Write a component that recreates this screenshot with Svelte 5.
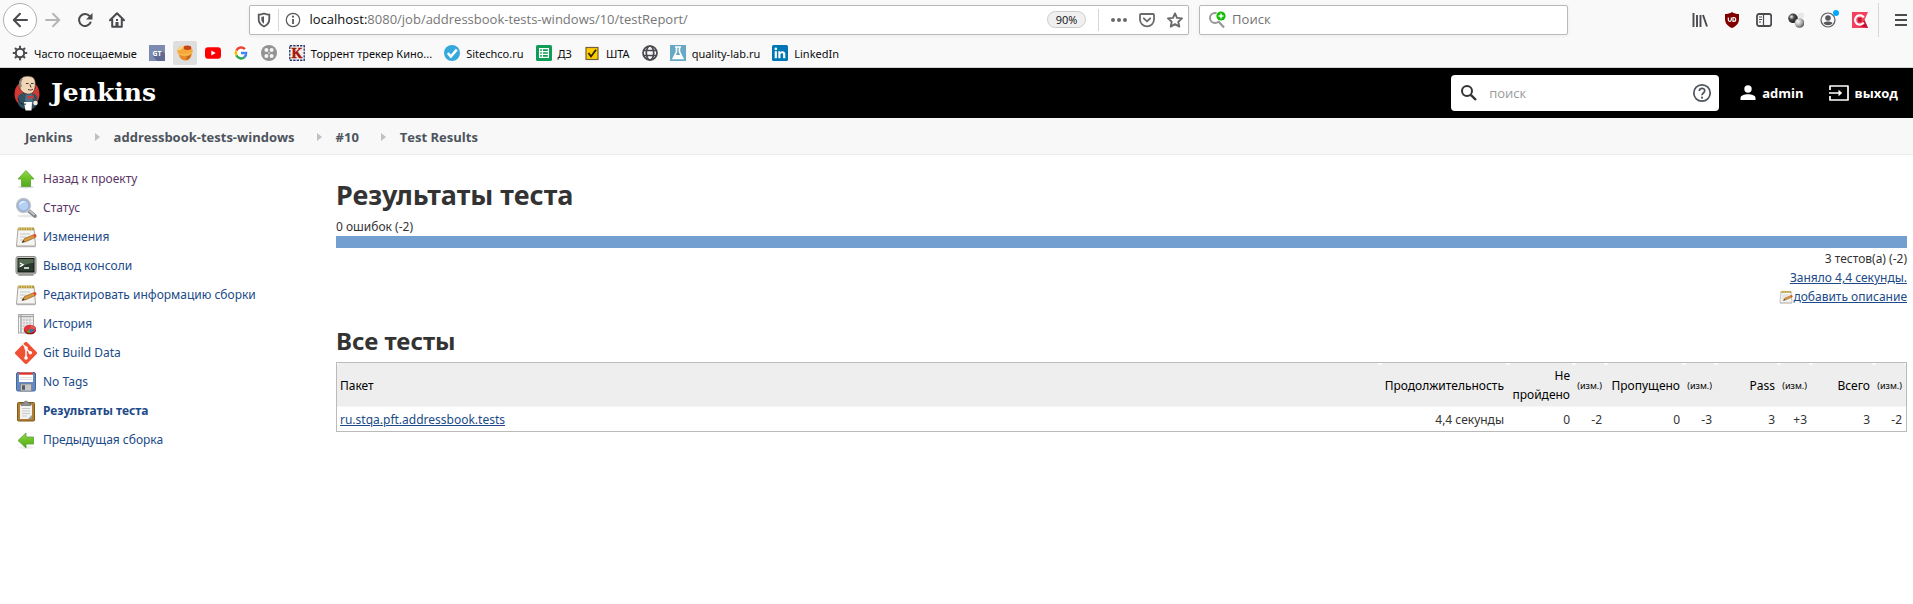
<script>
  const bookmarks = [
    { icon: 'gear', label: 'Часто посещаемые' },
    { icon: 'gt', name: 'GT' },
    { icon: 'bun', name: 'Bun', active: true },
    { icon: 'youtube', name: 'YouTube' },
    { icon: 'google', name: 'Google' },
    { icon: 'reel', name: 'Reel' },
    { icon: 'kino', label: 'Торрент трекер Кино...' },
    { icon: 'tick', label: 'Sitechco.ru' },
    { icon: 'sheet', label: 'ДЗ' },
    { icon: 'checkbox', label: 'ШТА' },
    { icon: 'globe', name: 'Globe' },
    { icon: 'flask', label: 'quality-lab.ru' },
    { icon: 'linkedin', label: 'LinkedIn' }
  ];

  const crumbs = ['Jenkins', 'addressbook-tests-windows', '#10', 'Test Results'];

  const tasks = [
    { icon: 'up', label: 'Назад к проекту', visited: true },
    { icon: 'search', label: 'Статус', visited: true },
    { icon: 'notepad', label: 'Изменения' },
    { icon: 'terminal', label: 'Вывод консоли' },
    { icon: 'notepad', label: 'Редактировать информацию сборки' },
    { icon: 'graph', label: 'История' },
    { icon: 'git', label: 'Git Build Data' },
    { icon: 'save', label: 'No Tags' },
    { icon: 'clipboard', label: 'Результаты теста', current: true },
    { icon: 'previous', label: 'Предыдущая сборка' }
  ];

  const columns = [
    { title: 'Продолжительность', cls: 'duration' },
    { title: 'Не пройдено', cls: 'failed' },
    { title: '(изм.)', cls: 'diff' },
    { title: 'Пропущено', cls: 'skipped' },
    { title: '(изм.)', cls: 'diff' },
    { title: 'Pass', cls: 'count' },
    { title: '(изм.)', cls: 'diff' },
    { title: 'Всего', cls: 'count' },
    { title: '(изм.)', cls: 'diff' }
  ];

  const rows = [
    { name: 'ru.stqa.pft.addressbook.tests', cells: ['4,4 секунды', '0', '-2', '0', '-3', '3', '+3', '3', '-2'] }
  ];
</script>

{#snippet bookmarkIcon(kind)}
  <svg width="16" height="16" viewBox="0 0 16 16" aria-hidden="true">
    {#if kind === 'gear'}
      <circle cx="8" cy="8" r="4.2" fill="none" stroke="#4a4a4f" stroke-width="2" />
      <g stroke="#4a4a4f" stroke-width="2" stroke-linecap="round">
        <path d="M8 1.6v2M8 12.4v2M1.6 8h2M12.4 8h2M3.5 3.5l1.3 1.3M11.2 11.2l1.3 1.3M3.5 12.5l1.3-1.3M11.2 4.8l1.3-1.3" />
      </g>
    {:else if kind === 'gt'}
      <rect width="16" height="16" fill="#7d8bb0" />
      <path d="M12.5 5.5 16 9v7H8L3.5 10.5z" fill="#5d6b93" />
      <text x="8" y="10.6" text-anchor="middle" font-size="7" font-weight="700" fill="#fff">GT</text>
    {:else if kind === 'bun'}
      <path d="M1.500 8 14.500 6.500c.8 4.500-1.500 9-6 9-4 0-6.500-3-7-7.500z" fill="#e8892a" />
      <path d="M9 15.300C12.500 14 14.500 11 14.500 7.500l-3.500 1z" fill="#c8651a" />
      <ellipse cx="8" cy="6" rx="7.800" ry="5.200" fill="#f5a93a" />
      <path d="M.5 5.500c1-3 4-4.600 6.500-4.700-.5 2.500-3 4.700-6.500 4.700z" fill="#fbd987" />
      <ellipse cx="10.500" cy="2.800" rx="3.800" ry="2.200" fill="#c8431a" />
      <path d="M1.500 8.600c3 2 9 1.900 13-.8" stroke="#fbc860" fill="none" stroke-width=".8" />
    {:else if kind === 'youtube'}
      <rect y="2.200" width="16" height="11.600" rx="3" fill="#f00" />
      <path d="M6.300 5.500v5L10.700 8z" fill="#fff" />
    {:else if kind === 'google'}
      <circle cx="8" cy="8" r="8" fill="#fff" />
      <g fill="none" stroke-width="2.500">
        <path d="M11.900 4.100A5.200 5.200 0 0 0 3.400 5.600" stroke="#ea4335" />
        <path d="M3.400 5.600a5.200 5.200 0 0 0 0 4.800" stroke="#fbbc05" />
        <path d="M3.400 10.400a5.200 5.200 0 0 0 8 1.800" stroke="#34a853" />
        <path d="M11.400 12.200A5.200 5.200 0 0 0 13.100 8.100H8" stroke="#4285f4" />
      </g>
    {:else if kind === 'reel'}
      <circle cx="8" cy="8" r="8" fill="#929292" />
      <g fill="#f4f4f4">
        <circle cx="5.400" cy="5" r="2" /><circle cx="10.600" cy="5" r="2" />
        <circle cx="5.400" cy="11" r="2" /><circle cx="10.600" cy="11" r="2" />
        <circle cx="8" cy="8" r=".8" />
      </g>
    {:else if kind === 'kino'}
      <rect x=".8" y=".8" width="14.400" height="14.400" fill="#fff" stroke="#28376c" stroke-width="1.400" stroke-dasharray="2.400 1" />
      <rect x="2" y="2" width="12" height="12" fill="#fbeee0" />
      <text x="8" y="13" text-anchor="middle" font-size="14" font-weight="700" fill="#a3160d" stroke="#a3160d" stroke-width=".5" class="serif">K</text>
    {:else if kind === 'tick'}
      <circle cx="8" cy="8" r="8" fill="#35a9dc" />
      <path d="m3.800 8 3 3.500 6-6.800" fill="none" stroke="#fff" stroke-width="2.600" />
    {:else if kind === 'sheet'}
      <rect width="16" height="16" rx="1.500" fill="#109d58" />
      <path d="M3 3h10v10H3z" fill="#fff" />
      <path d="M4.200 4.300h1.600v1.600H4.200zM7 4.300h4.800v1.600H7zM4.200 7.200h1.600v1.600H4.200zM7 7.200h4.800v1.600H7zM4.200 10.100h1.600v1.600H4.200zM7 10.100h4.800v1.600H7z" fill="#109d58" />
    {:else if kind === 'checkbox'}
      <rect x="2" y="2.500" width="12" height="12" fill="#fc0" stroke="#716339" stroke-width="1.200" />
      <path d="m4.500 8 2.500 3.500L12 4.800" fill="none" stroke="#2d2500" stroke-width="1.800" />
    {:else if kind === 'globe'}
      <g fill="none" stroke="#4a4a4f" stroke-width="1.700">
        <circle cx="8" cy="8" r="7" /><ellipse cx="8" cy="8" rx="3.700" ry="7" />
        <path d="M1.500 5.500h13M1.500 10.500h13" />
      </g>
    {:else if kind === 'flask'}
      <rect width="16" height="16" fill="#67a8c5" />
      <path d="M5 2h6M6.500 2v4.800L3.200 13.500h9.600L9.500 6.800V2" fill="none" stroke="#fff" stroke-width="1.600" />
      <path d="M5.500 10h5l1.500 3H4z" fill="#fff" />
    {:else if kind === 'linkedin'}
      <rect width="16" height="16" rx="1.500" fill="#0077b5" />
      <path d="M2.700 6.300h2.200v7H2.700zM6.300 6.300h2.100v1c.9-1.700 4.900-1.800 4.900 1.700v4.300h-2.200V9.600c0-2-2.600-1.800-2.600 0v3.700H6.300z" fill="#fff" />
      <circle cx="3.800" cy="3.900" r="1.300" fill="#fff" />
    {/if}
  </svg>
{/snippet}

{#snippet notepad(size)}
  <svg width={size} height={size} viewBox="0 0 22 22" aria-hidden="true">
    <path d="M1.500 20.500h19" stroke="#bbb" stroke-width="1.500" />
    <path d="M3 2.500h16l1.500 17.500h-19z" fill="#f4f4f2" stroke="#aaa69d" />
    <path d="M3 1.500h16v2.800H3z" fill="#b6993b" />
    <path d="M4 1.200v2.500M6.500 1.200v2.500M9 1.200v2.500M11.500 1.200v2.500M14 1.200v2.500M16.500 1.200v2.500" stroke="#e5d28a" />
    <path d="M5 8h10M5 11h6M5 14h3" stroke="#c6c6c6" />
    <path d="m7 16.500 2.500-4 9-3.700 1.700 2.700-9 4z" fill="#dc9a3c" stroke="#8a5a20" stroke-width=".7" />
    <path d="m18 9 2.300-1.300 1.500 2.500-2 1.300z" fill="#e04732" />
    <path d="m7 16.500 1.300-2.200 1.500 1.500z" fill="#333" />
  </svg>
{/snippet}

{#snippet taskIcon(kind)}
  {#if kind === 'notepad'}
    {@render notepad(22)}
  {:else}
    <svg width="22" height="22" viewBox="0 0 22 22" aria-hidden="true">
      {#if kind === 'up'}
        <ellipse cx="11" cy="19" rx="8" ry="1.500" fill="#ddd" />
        <path d="M11 2.500 19 11h-3.500v7.500h-9V11H3z" fill="url(#leaf)" stroke="#58a52c" stroke-width=".8" />
      {:else if kind === 'previous'}
        <ellipse cx="11" cy="18.500" rx="8" ry="1.500" fill="#eee" />
        <path d="M3 11.500 11 4v4h7.500v7H11v4z" fill="url(#leaf)" stroke="#5b9f3a" stroke-width=".8" />
      {:else if kind === 'search'}
        <ellipse cx="11" cy="19" rx="9" ry="1.500" fill="#e8e8e8" />
        <path d="m14 14 6 5" stroke="#85878a" stroke-width="3.600" stroke-linecap="round" />
        <path d="m14.500 13.800 5 4.200" stroke="#d5d7d9" stroke-width="1.300" />
        <circle cx="8.500" cy="8.500" r="6.700" fill="#b5d0f3" stroke="#c2c4c5" stroke-width="2" />
        <path d="M4 8.500a4.500 4.500 0 0 1 7-3.800c-3 .2-5 1.800-7 3.800z" fill="#e8f2fd" />
        <circle cx="8.500" cy="8.500" r="5.600" fill="none" stroke="#7da2d2" />
      {:else if kind === 'terminal'}
        <path d="M5 18h12l2 3H3z" fill="#aaa" />
        <rect x="1" y="1.500" width="20" height="17.500" rx="2" fill="#c9cac5" stroke="#85877f" />
        <rect x="3" y="3.500" width="16" height="13.500" fill="#2b3b2c" stroke="#111" />
        <path d="M3.500 4h15v4c-5 0-10 2-15 5z" fill="#536851" />
        <path d="m5 8 3 1.800L5 11.600M9 13h5" fill="none" stroke="#fff" stroke-width="1.300" />
      {:else if kind === 'graph'}
        <rect x="3.500" y="1.500" width="15" height="18.500" fill="#f7f7f7" stroke="#aaa" />
        <path d="M4 3.500h14M6 2v18" stroke="#a5a5a5" stroke-width="1.500" />
        <path d="M6 7h12M6 10h12M6 13h12M6 16h12M9 4v16M12 4v16M15 4v16" stroke="#bbb" stroke-width=".8" />
        <ellipse cx="15" cy="17.300" rx="6" ry="4" fill="#8b1118" />
        <ellipse cx="15" cy="15.800" rx="6" ry="4" fill="#df3439" />
        <path d="m15 15.800 1-3.700c3 .3 5 1.700 5 3.700z" fill="#d85c59" />
        <path d="M15 16v4c-1.500 0-2.500-.4-3.500-1z" fill="#619a2c" />
        <path d="M15 16h4c0 2-1.500 3-4 3.800z" fill="#3c70ad" />
      {:else if kind === 'git'}
        <path d="M9.700.6a1.800 1.800 0 0 1 2.600 0l9.100 9.100a1.800 1.800 0 0 1 0 2.600l-9.100 9.100a1.800 1.800 0 0 1-2.600 0L.6 12.300a1.800 1.800 0 0 1 0-2.600z" fill="#f05033" />
        <path d="m8 2.500 3 3v11M11 6.500l4 4" stroke="#fff" stroke-width="1.500" fill="none" />
        <circle cx="11" cy="6" r="1.800" fill="#fff" /><circle cx="11" cy="16" r="1.800" fill="#fff" /><circle cx="15.300" cy="10.800" r="1.800" fill="#fff" />
      {:else if kind === 'save'}
        <rect x="1.500" y="1.500" width="19" height="18.500" rx="1.500" fill="#6389c3" stroke="#45699f" />
        <path d="M4 1.500h14v9.500H4z" fill="#fff" />
        <path d="M4 1.500h14v2.200H4z" fill="#e33325" />
        <path d="M5 6.500h12M5 8.500h12" stroke="#ddd" />
        <rect x="5.500" y="13" width="11" height="7" fill="#c5c7c9" stroke="#7a7d82" stroke-width=".7" />
        <rect x="7" y="14.300" width="3" height="4.500" fill="#565b63" />
      {:else if kind === 'clipboard'}
        <rect x="2.500" y="2.500" width="17" height="18.500" rx="1" fill="#b17d31" stroke="#80591d" />
        <path d="M5 4.500h12v14.500H5z" fill="#f2f2f0" />
        <path d="M7 8.500h8M7 11h8M7 13.500h8M7 16h5" stroke="#c9c9c9" />
        <path d="m17 15-4 4h4z" fill="#999" />
        <path d="M6 5.500V3.700l2.500-.7c.5-2.500 4.500-2.500 5 0l2.500.7v1.800z" fill="#8f918c" stroke="#60625e" stroke-width=".6" />
      {/if}
    </svg>
  {/if}
{/snippet}

<svg class="defs" width="0" height="0" aria-hidden="true">
  <defs>
    <linearGradient id="leaf" x1="0" y1="0" x2="0" y2="1">
      <stop offset="0" stop-color="#92d850" /><stop offset=".5" stop-color="#6cc026" /><stop offset="1" stop-color="#55a91d" />
    </linearGradient>
    <radialGradient id="ball" cx=".35" cy=".35" r=".7">
      <stop offset="0" stop-color="#fff" /><stop offset=".35" stop-color="#555" /><stop offset="1" stop-color="#111" />
    </radialGradient>
    <radialGradient id="ballLight" cx=".35" cy=".35" r=".7">
      <stop offset="0" stop-color="#fff" /><stop offset=".6" stop-color="#aaa" /><stop offset="1" stop-color="#555" />
    </radialGradient>
  </defs>
</svg>

<div class="browser">
  <div class="toolbar">
    <div class="nav">
      <button class="back" aria-label="Назад">
        <svg width="16" height="16" viewBox="0 0 16 16"><path d="M15 8H2M8 1.800 1.800 8 8 14.200" fill="none" stroke="#4a4a4f" stroke-width="2" stroke-linecap="round" stroke-linejoin="round" /></svg>
      </button>
      <button aria-label="Вперёд">
        <svg width="16" height="16" viewBox="0 0 16 16"><path d="M1 8h13M8 1.800 14.200 8 8 14.200" fill="none" stroke="#b5b5b6" stroke-width="2" stroke-linecap="round" stroke-linejoin="round" /></svg>
      </button>
      <button aria-label="Обновить">
        <svg width="16" height="16" viewBox="0 0 16 16"><path d="M13.500 10.500a6 6 0 1 1-.8-6.300" fill="none" stroke="#4a4a4f" stroke-width="2" stroke-linecap="round" /><path d="M15.500 1v6.500H9z" fill="#4a4a4f" /></svg>
      </button>
      <button aria-label="Домой">
        <svg width="16" height="16" viewBox="0 0 16 16"><path d="M1 8.200 8 1.300l7 6.900M3.200 7v7.700h9.600V7" fill="none" stroke="#4a4a4f" stroke-width="2" stroke-linecap="round" stroke-linejoin="round" /><path d="M6.500 15v-5h3v5M7 7h2v2H7z" fill="#4a4a4f" /></svg>
      </button>
    </div>
    <div class="spacer"></div>
    <div class="field url">
      <svg width="16" height="16" viewBox="0 0 16 16" aria-hidden="true"><path d="M8 1.500c2 .9 3.500 1.200 5.300 1.200v4.500c0 3.300-2 5.800-5.300 7.300-3.300-1.500-5.300-4-5.300-7.300V2.700C4.500 2.700 6 2.400 8 1.500z" fill="none" stroke="#58585c" stroke-width="1.800" /><path d="M8 4.200v7.500C6 10.500 5.300 9 5.300 7V5z" fill="#58585c" /></svg>
      <i class="line"></i>
      <svg width="16" height="16" viewBox="0 0 16 16" aria-hidden="true"><circle cx="8" cy="8" r="6.700" fill="none" stroke="#58585c" stroke-width="1.200" /><path d="M8 7v5" stroke="#58585c" stroke-width="1.800" /><circle cx="8" cy="4.700" r="1.100" fill="#58585c" /></svg>
      <div class="address">localhost:<span>8080/job/addressbook-tests-windows/10/testReport/</span></div>
      <button class="zoom">90%</button>
      <i class="line"></i>
      <div class="actions">
        <svg width="16" height="16" viewBox="0 0 16 16" aria-hidden="true"><g fill="#6a6a6d"><circle cx="2" cy="8" r="2" /><circle cx="8" cy="8" r="2" /><circle cx="14" cy="8" r="2" /></g></svg>
        <svg width="16" height="16" viewBox="0 0 16 16" aria-hidden="true"><path d="M2 2h12c.6 0 1 .4 1 1v4.500a7 6.800 0 0 1-14 0V3c0-.6.400-1 1-1z" fill="none" stroke="#6a6a6d" stroke-width="1.800" /><path d="M4.800 6.300 8 9.400l3.200-3.100" fill="none" stroke="#6a6a6d" stroke-width="1.800" stroke-linecap="round" stroke-linejoin="round" /></svg>
        <svg width="16" height="16" viewBox="0 0 16 16" aria-hidden="true"><path d="m8 1.400 2 4.500 5 .500-3.700 3.300 1 4.900L8 12.100l-4.300 2.500 1-4.900L1 6.400l5-.5z" fill="none" stroke="#6a6a6d" stroke-width="1.900" stroke-linejoin="round" /></svg>
      </div>
    </div>
    <div class="field websearch">
      <svg width="18" height="18" viewBox="0 0 18 18" aria-hidden="true"><circle cx="7" cy="7" r="5" fill="none" stroke="#98989a" stroke-width="2" /><path d="m10.500 10.500 5.500 6" stroke="#98989a" stroke-width="2.200" /><circle cx="13" cy="5" r="5.200" fill="#fff" /><circle cx="13" cy="5" r="4.600" fill="#12bc00" /><path d="M13 2.500v5M10.500 5h5" stroke="#fff" stroke-width="1.400" /></svg>
      <input type="text" placeholder="Поиск" aria-label="Поиск в интернете" />
    </div>
    <div class="spacer"></div>
    <div class="extensions">
      <svg width="16" height="16" viewBox="0 0 16 16" aria-hidden="true"><path d="M1.500 1v14M5 3v12M8.500 3v12M11 3l4 11.500" stroke="#4a4a4f" stroke-width="1.900" /></svg>
      <svg width="16" height="16" viewBox="0 0 16 16" aria-hidden="true"><path d="M8 0c2 1.500 4.500 2 7 2v5c0 5-3.500 7.500-7 9-3.500-1.500-7-4-7-9V2c2.500 0 5-.5 7-2z" fill="#800000" /><path d="M4.300 5.500v2.300a1.500 1.500 0 0 0 3 0V5.500M9 5.500v3.800h.8a1.900 1.900 0 0 0 0-3.800z" fill="none" stroke="#fff" stroke-width="1.200" /></svg>
      <svg width="16" height="16" viewBox="0 0 16 16" aria-hidden="true"><rect x="1" y="2" width="14.200" height="12" rx="2" fill="none" stroke="#4a4a4f" stroke-width="1.800" /><path d="M7.500 2v12M3 5h3M3 7.500h3M3 10h2" stroke="#4a4a4f" stroke-width="1.200" /></svg>
      <svg width="16" height="16" viewBox="0 0 16 16" aria-hidden="true"><circle cx="13" cy="3.500" r="3" fill="#e8e8e8" /><circle cx="5" cy="6.300" r="4.800" fill="url(#ball)" /><circle cx="11.500" cy="11" r="4.800" fill="url(#ballLight)" /></svg>
      <span class="account">
        <svg width="16" height="16" viewBox="0 0 16 16" aria-hidden="true"><circle cx="8" cy="8" r="7" fill="none" stroke="#58585c" stroke-width="1.200" /><circle cx="8" cy="6" r="2.800" fill="#58585c" /><path d="M3.500 11c1.500-2 7.500-2 9 0-1.500 3-7.500 3-9 0z" fill="#58585c" /></svg>
      </span>
      <svg width="16" height="16" viewBox="0 0 16 16" aria-hidden="true"><path d="M0 0h16l-3.500 8 3.500 8H0z" fill="#f5405e" /><path d="M4 13.500 16 16l-3.500-8L9 12z" fill="#c5142f" /><path d="M11.800 5.500a4.700 4.700 0 1 0 0 5" fill="none" stroke="#fff" stroke-width="2.200" /><path d="M6.800 10.200V6.600h1.400a1 1 0 0 1 0 2H6.800M8.300 8.800l1 1.400" fill="none" stroke="#b21029" stroke-width="1.100" /></svg>
    </div>
    <i class="line tall"></i>
    <button class="menu" aria-label="Меню">
      <svg width="16" height="16" viewBox="0 0 16 16"><path d="M2 3h12M2 8h12M2 13h12" stroke="#4a4a4f" stroke-width="2" /></svg>
    </button>
  </div>
  <nav class="bookmarks" aria-label="Закладки">
    {#each bookmarks as b}
      <a href="#top" class:active={b.active} aria-label={b.label ?? b.name}>
        {@render bookmarkIcon(b.icon)}{#if b.label}<span>{b.label}</span>{/if}
      </a>
    {/each}
  </nav>
</div>

<header>
  <a href="#top" class="logo">
    <svg width="26" height="36" viewBox="0 0 26 36" aria-hidden="true">
      <ellipse cx="13" cy="19" rx="12.500" ry="13.500" fill="#d33833" />
      <path d="M4 21c2-2.500 5-3.500 9-3.500 5 0 9 1.500 10.500 4.500l-1 8.500c-2.500 3-5 4-8 4-4 0-8-1.500-10-4.500z" fill="#335061" />
      <path d="M12 19h6l1 9-3 4-5-7z" fill="#49728b" />
      <path d="M7 4c2-3.500 10-4 13-.5 2 2.500 1.500 8 .5 11-1 3.500-4 5-7 4.500-4-.5-7-3-8-7-.5-3 0-6 1.500-8z" fill="#f0d6b7" stroke="#3d2b20" stroke-width=".7" />
      <path d="M7 3.500C4.500 6 4.300 10 6 13.500l2-2.500c-1.500-2-1-5 1-7z" fill="#8b8379" />
      <path d="M12 8.500h2.500M17 8.500h2.500M14 14.500c2 .8 3.500.6 5-.3M16 9.500l1 3" stroke="#463328" fill="none" />
      <path d="m13.500 20 3 1.500 3-1.800v4.500l-3-1.500-3 1.500z" fill="#d33833" />
      <path d="M10 27h8l-.5 8.500h-6z" fill="#fff" />
      <path d="M4 23c1 5 4 7 8 6" fill="none" stroke="#162b38" />
      <circle cx="21.500" cy="28" r="2.300" fill="#f4e9df" />
    </svg>
    <span>Jenkins</span>
  </a>
  <div class="account-bar">
    <div class="sitesearch">
      <svg width="18" height="18" viewBox="0 0 18 18" aria-hidden="true"><circle cx="7" cy="7" r="5" fill="none" stroke="#333" stroke-width="2" /><path d="m10.800 10.800 5.200 5.200" stroke="#333" stroke-width="2.400" /></svg>
      <input type="text" placeholder="поиск" aria-label="поиск" />
      <svg width="20" height="20" viewBox="0 0 20 20" aria-hidden="true"><circle cx="10" cy="10" r="8.200" fill="none" stroke="#4d545d" stroke-width="1.700" /><path d="M7.300 8c0-3.500 5.400-3.500 5.400-.2C12.700 10 10 10 10 12.300" fill="none" stroke="#4d545d" stroke-width="1.700" /><circle cx="10" cy="14.700" r="1.100" fill="#4d545d" /></svg>
    </div>
    <a href="#user" class="user">
      <svg width="16" height="16" viewBox="0 0 16 16" aria-hidden="true"><circle cx="8" cy="4" r="3.700" fill="#fff" /><path d="M.5 15v-2c0-5 15-5 15 0v2z" fill="#fff" /></svg>
      admin
    </a>
    <a href="#logout" class="user">
      <svg width="20" height="16" viewBox="0 0 20 16" aria-hidden="true"><path d="M1 5V1h18v14H1v-4M0 8h11" fill="none" stroke="#fff" stroke-width="1.700" stroke-linejoin="round" /><path d="m9.500 4.800 3.700 3.200-3.700 3.200z" fill="#fff" /></svg>
      выход
    </a>
  </div>
</header>

<nav class="breadcrumbs" aria-label="Путь">
  {#each crumbs as crumb, i}
    {#if i > 0}<svg width="5" height="8" viewBox="0 0 5 8" aria-hidden="true"><path d="m0 0 5 4-5 4z" fill="#c0c0c0" /></svg>{/if}
    <a href="#top">{crumb}</a>
  {/each}
</nav>

<div class="page">
  <nav class="tasks" aria-label="Задачи">
    {#each tasks as task}
      <a href="#top" class:visited={task.visited} class:current={task.current}>
        {@render taskIcon(task.icon)}<span>{task.label}</span>
      </a>
    {/each}
  </nav>
  <main>
    <h1>Результаты теста</h1>
    <div>0 ошибок (-2)</div>
    <div class="bar"></div>
    <div class="summary">
      <div>3 тестов(а) (-2)</div>
      <a href="#history">Заняло 4,4 секунды.</a>
      <div class="describe">{@render notepad(14)}<a href="#edit">добавить описание</a></div>
    </div>
    <h2>Все тесты</h2>
    <table>
      <thead>
        <tr>
          <th class="package" scope="col">Пакет</th>
          {#each columns as c}<th scope="col" class={c.cls}>{c.title}</th>{/each}
        </tr>
      </thead>
      <tbody>
        {#each rows as row}
          <tr>
            <td class="package"><a href="#package">{row.name}</a></td>
            {#each row.cells as cell}<td>{cell}</td>{/each}
          </tr>
        {/each}
      </tbody>
    </table>
  </main>
</div>

<style>
  :global(body) {
    background: #fff;
    color: #333;
    font: 12px/19px "Noto Sans", "Open Sans", sans-serif;
  }
  button { font: inherit; border: 0; background: none; padding: 0; }
  input { font: inherit; border: 0; outline: 0; background: none; padding: 0; min-width: 0; flex: 1; }
  svg { display: block; flex: none; }
  .defs { position: absolute; }

  .browser { background: #f9f9fa; border-bottom: 1px solid #d5d5d6; }
  .toolbar { display: flex; align-items: center; height: 39px; padding-left: 3px; font-family: "Open Sans", "Noto Sans", sans-serif; }
  .nav { display: flex; align-items: center; }
  .nav button { width: 32px; height: 34px; display: grid; place-items: center; }
  .nav .back { width: 34px; border: 1px solid #b1b1b3; border-radius: 50%; background: #fff; box-sizing: border-box; }
  .spacer { flex: 116; }
  .websearch + .spacer { flex: 124; }
  .field {
    display: flex;
    align-items: center;
    box-sizing: border-box;
    height: 30px;
    background: #fff;
    border: 1px solid #b9b9bb;
    border-radius: 2px;
    box-shadow: 0 1px 4px rgba(0, 0, 0, .06);
    font-size: 13px;
  }
  .url { flex: 923; padding: 0 5px 0 6px; }
  .websearch { flex: 349; margin-left: 10px; padding: 0 8px; gap: 6px; }
  .websearch input::placeholder { color: #737373; opacity: 1; }
  .line { width: 1px; height: 22px; background: #d7d7db; margin: 0 6px; flex: none; }
  .address { flex: 1; color: #0c0c0d; margin-left: 8px; white-space: nowrap; overflow: hidden; }
  .address span { color: #777; }
  .zoom {
    border: 1px solid #ccc;
    border-radius: 9px;
    background: #f0f0f1;
    width: 39px;
    height: 17px;
    font-size: 11px;
    line-height: 15px;
    margin-right: 6px;
    color: #0c0c0d;
  }
  .actions { display: flex; gap: 12px; margin-left: 6px; }
  .extensions { display: flex; gap: 16px; }
  .account { position: relative; }
  .account::after {
    content: "";
    position: absolute;
    top: -2px;
    right: -3px;
    width: 6px;
    height: 6px;
    border-radius: 50%;
    background: #00a9ff;
  }
  .line.tall { height: 34px; margin: 0 10px; }
  .menu { width: 24px; display: grid; place-items: center; }

  .bookmarks { display: flex; align-items: center; gap: 4px; height: 28px; padding: 0 8px; font-size: 11px; }
  .bookmarks a {
    display: flex;
    align-items: center;
    gap: 6px;
    height: 24px;
    padding: 0 4px;
    border-radius: 2px;
    color: #0c0c0d;
    text-decoration: none;
    white-space: nowrap;
  }
  .bookmarks .active { background: #dedede; }
  .serif { font-family: "Liberation Serif", serif; }

  header {
    display: flex;
    align-items: center;
    justify-content: space-between;
    height: 50px;
    padding: 0 15px 0 14px;
    background: #000;
    font-family: "Open Sans", "Noto Sans", sans-serif;
    font-size: 13px;
  }
  header a { color: #fff; text-decoration: none; display: flex; align-items: center; }
  .logo { gap: 11px; font: bold 25px/32px "DejaVu Serif", serif; }
  .account-bar { display: flex; align-items: center; }
  .sitesearch {
    display: flex;
    align-items: center;
    box-sizing: border-box;
    width: 268px;
    height: 36px;
    padding: 0 7px 0 9px;
    background: #fff;
    border-radius: 4px;
    gap: 11px;
  }
  .sitesearch input::placeholder { color: #9a9a9a; opacity: 1; }
  .user { font-weight: 700; gap: 6px; margin-left: 21px; }
  .user + .user { margin-left: 25px; }

  .breadcrumbs {
    display: flex;
    align-items: center;
    box-sizing: border-box;
    height: 37px;
    padding: 2px 25px 0;
    background: #f8f8f8;
    border-bottom: 1px solid #ececec;
    font-family: "Open Sans", "Noto Sans", sans-serif;
    font-size: 13px;
  }
  .breadcrumbs a { color: #4d545d; font-weight: 700; text-decoration: none; }
  .breadcrumbs svg { margin: 0 14px 0 22px; }

  .page { display: flex; padding: 9px 6px 0 15px; }
  .tasks { width: 321px; flex: none; }
  .tasks a { display: flex; align-items: center; gap: 6px; height: 29px; color: #204a87; text-decoration: none; }
  .tasks .visited { color: #5c3566; }
  .tasks .current { font-weight: 700; }

  main { flex: 1; min-width: 0; }
  main a { color: #204a87; text-decoration: underline; }
  h1 { margin: 13px 0 4px; font-size: 27px; line-height: 36px; }
  h2 { margin: 19px 0 5px; font-size: 24px; line-height: 32px; }
  .bar { height: 12px; background: #729fcf; }
  .summary { text-align: right; padding-top: 1px; }
  .describe { display: flex; justify-content: flex-end; align-items: center; }

  table { width: 100%; border-collapse: separate; border-spacing: 0; border: 1px solid #bbb; table-layout: fixed; }
  th { background: #eee; color: #000; font-weight: 400; border-radius: 4px 4px 0 0; border-bottom: 1px solid #f5f5f5; }
  th, td { padding: 3px 4px 2px; text-align: right; box-sizing: border-box; }
  .package { text-align: left; padding-left: 3px; }
  .duration { width: 128px; }
  .failed { width: 66px; }
  .skipped { width: 78px; }
  .count { width: 63px; }
  th.diff { width: 32px; font-size: 9px; padding-left: 0; }
</style>
